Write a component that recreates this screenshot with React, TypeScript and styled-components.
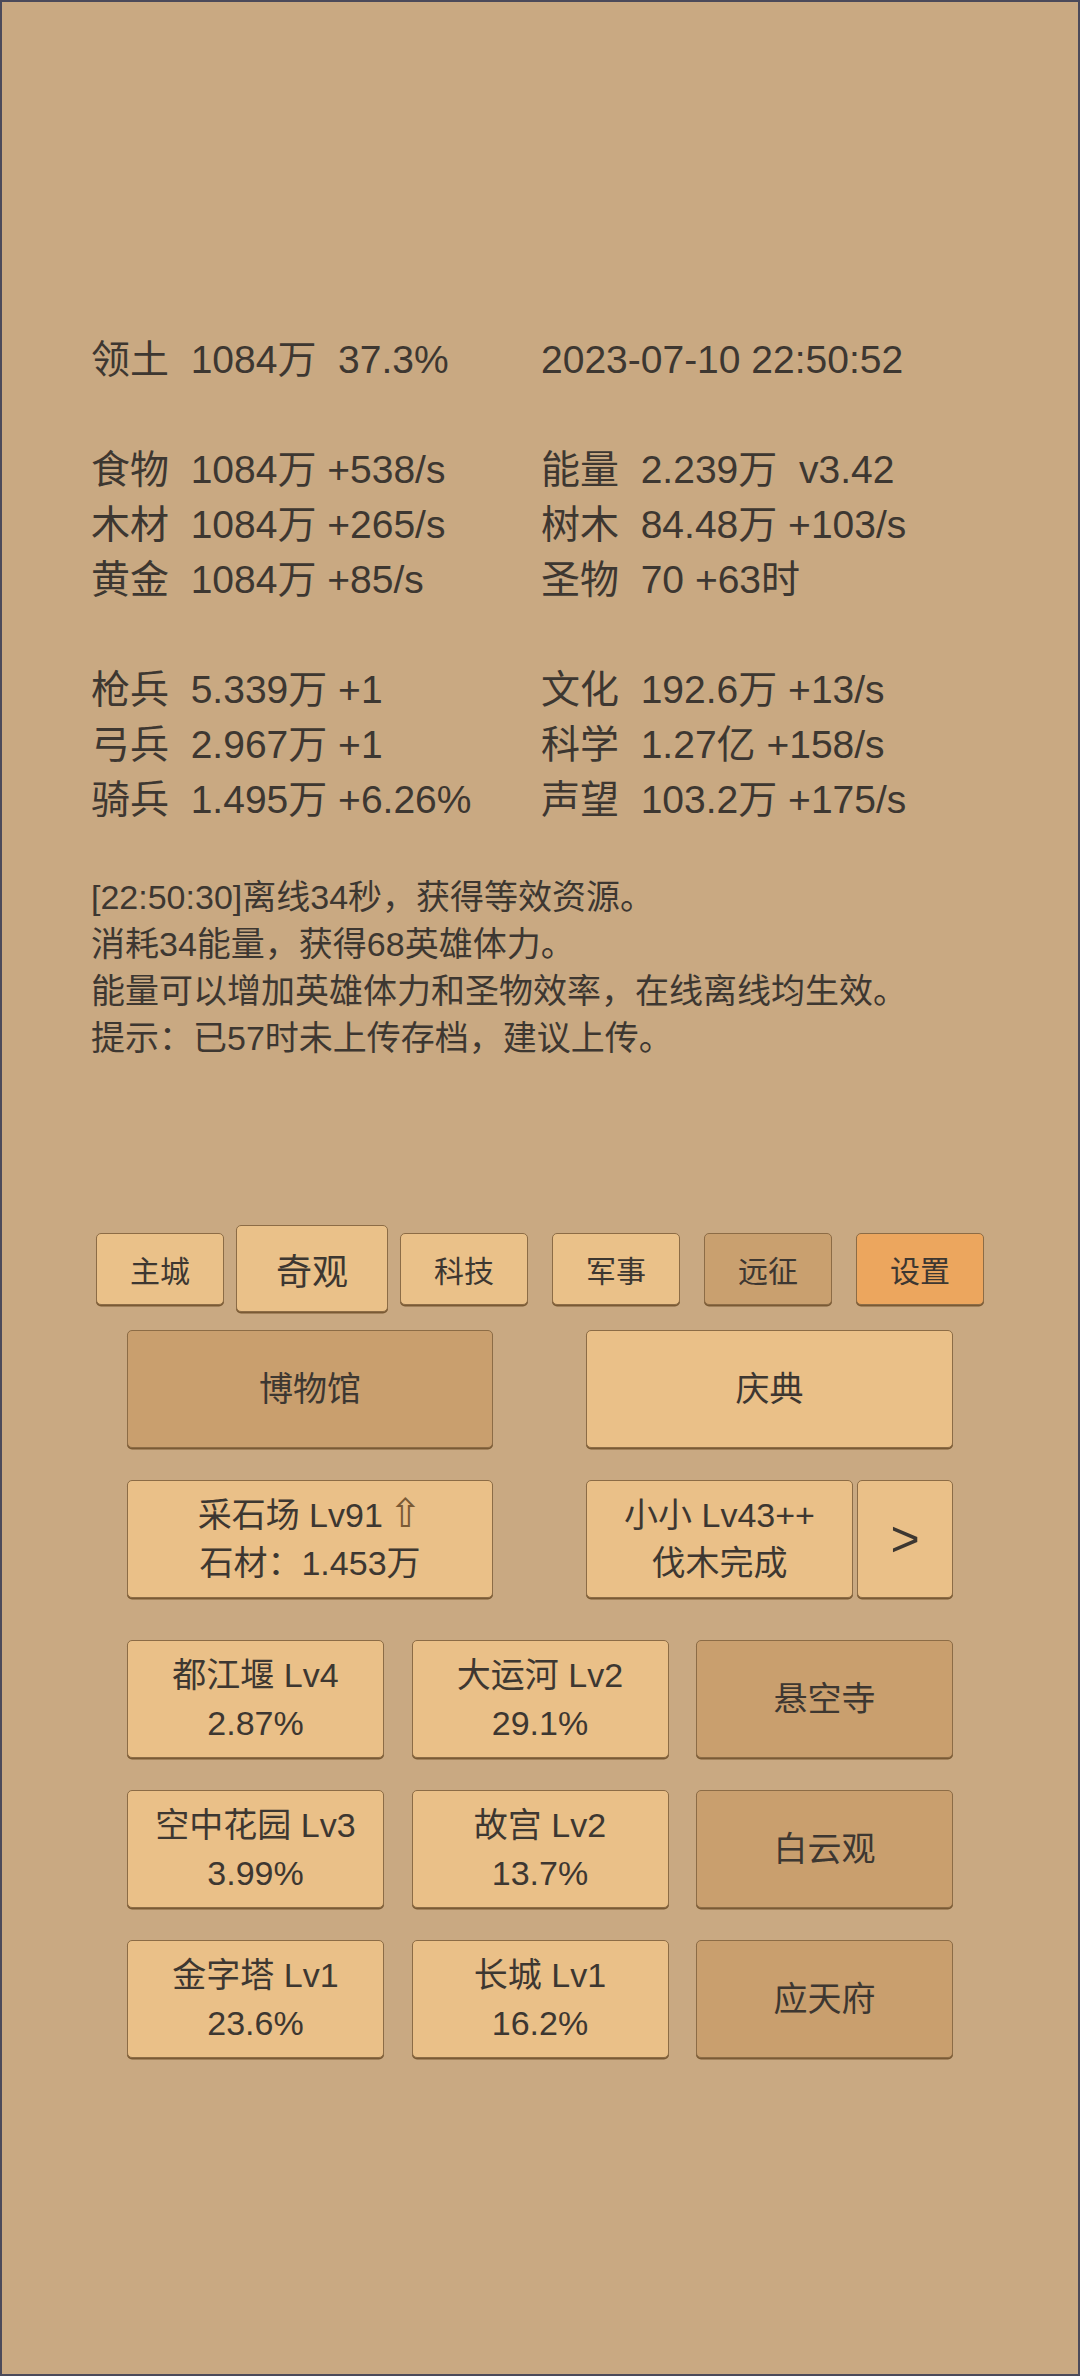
import styled, { createGlobalStyle } from "styled-components";

const GlobalStyle = createGlobalStyle`
    html, body {
        margin: 0;
        padding: 0;
        background: #c9a982;
    }
    * {
        box-sizing: border-box;
    }
`;

const Page = styled.div`
    width: 1080px;
    height: 2376px;
    border: 2px solid #4b4a5a;
    background: #c9a982;
    padding-top: 330px;
    font-family: "Liberation Sans", "Noto Sans CJK SC", sans-serif;
    color: #3d3731;
    overflow: hidden;
`;

const Stats = styled.div`
    padding-left: 89px;
    font-size: 39px;
    line-height: 55px;
`;

const StatRow = styled.div`
    display: grid;
    grid-template-columns: 450px 1fr;
    height: 55px;
    white-space: pre;
`;

const Log = styled.div`
    margin-top: 47px;
    padding-left: 89px;
    font-size: 34px;
    line-height: 47px;
`;

const Tabs = styled.div`
    margin-top: 163px;
    display: grid;
    grid-template-columns: repeat(6, 152px);
    justify-content: center;
    justify-items: center;
    align-items: center;
    height: 87px;
`;

const Tab = styled.div<{ $active?: boolean; $tone?: "light" | "dark" | "orange" }>`
    width: ${props => props.$active ? "152px" : "128px"};
    height: ${props => props.$active ? "87px" : "72px"};
    display: flex;
    align-items: center;
    justify-content: center;
    font-size: ${props => props.$active ? "36px" : "30px"};
    background: ${props =>
        props.$tone === "dark" ? "#c9a06f" : props.$tone === "orange" ? "#eca65e" : "#eac189"};
    border: 1px solid #8c6c46;
    border-radius: 5px;
    box-shadow: 0 1.5px 0 #7a5a34;
`;

const Pair = styled.div<{ $top: number }>`
    margin-top: ${props => props.$top}px;
    display: grid;
    grid-template-columns: 366px 367px;
    column-gap: 93px;
    justify-content: center;
    height: 118px;
`;

const Split = styled.div`
    display: grid;
    grid-template-columns: 267px 96px;
    column-gap: 4px;
`;

const Button = styled.div<{ $dark?: boolean; $big?: boolean }>`
    display: flex;
    flex-direction: column;
    align-items: center;
    justify-content: center;
    height: 118px;
    font-size: ${props => props.$big ? "50px" : "34px"};
    line-height: 48px;
    background: ${props => props.$dark ? "#c99f6e" : "#eac088"};
    border: 1px solid #8c6c46;
    border-radius: 5px;
    box-shadow: 0 1.5px 0 #7a5a34;
    white-space: pre;
`;

const Arrow = styled.span`
    font-family: "DejaVu Sans", sans-serif;
    color: #7a5a35;
    font-size: 40px;
    line-height: 40px;
    margin-left: 6px;
`;

const Wonders = styled.div`
    margin-top: 42px;
    display: grid;
    grid-template-columns: repeat(3, 257px);
    grid-auto-rows: 118px;
    column-gap: 27.5px;
    row-gap: 32px;
    justify-content: center;
`;

const stats: ([string, string] | null)[] = [
    ["领土  1084万  37.3%", "2023-07-10 22:50:52"],
    null,
    ["食物  1084万 +538/s", "能量  2.239万  v3.42"],
    ["木材  1084万 +265/s", "树木  84.48万 +103/s"],
    ["黄金  1084万 +85/s", "圣物  70 +63时"],
    null,
    ["枪兵  5.339万 +1", "文化  192.6万 +13/s"],
    ["弓兵  2.967万 +1", "科学  1.27亿 +158/s"],
    ["骑兵  1.495万 +6.26%", "声望  103.2万 +175/s"],
];

const logLines = [
    "[22:50:30]离线34秒，获得等效资源。",
    "消耗34能量，获得68英雄体力。",
    "能量可以增加英雄体力和圣物效率，在线离线均生效。",
    "提示：已57时未上传存档，建议上传。",
];

const tabs: { label: string; active?: boolean; tone?: "light" | "dark" | "orange" }[] = [
    { label: "主城" },
    { label: "奇观", active: true },
    { label: "科技" },
    { label: "军事" },
    { label: "远征", tone: "dark" },
    { label: "设置", tone: "orange" },
];

const wonders: { name: string; value?: string }[] = [
    { name: "都江堰 Lv4", value: "2.87%" },
    { name: "大运河 Lv2", value: "29.1%" },
    { name: "悬空寺" },
    { name: "空中花园 Lv3", value: "3.99%" },
    { name: "故宫 Lv2", value: "13.7%" },
    { name: "白云观" },
    { name: "金字塔 Lv1", value: "23.6%" },
    { name: "长城 Lv1", value: "16.2%" },
    { name: "应天府" },
];

export default function App() {
    return (
        <>
            <GlobalStyle />
            <Page>
                <Stats>
                    {stats.map((row, i) => (
                        <StatRow key={i}>
                            {row && <span>{row[0]}</span>}
                            {row && <span>{row[1]}</span>}
                        </StatRow>
                    ))}
                </Stats>
                <Log>
                    {logLines.map(line => <div key={line}>{line}</div>)}
                </Log>
                <Tabs>
                    {tabs.map(t => (
                        <Tab key={t.label} $active={t.active} $tone={t.tone}>{t.label}</Tab>
                    ))}
                </Tabs>
                <Pair $top={18}>
                    <Button $dark>博物馆</Button>
                    <Button>庆典</Button>
                </Pair>
                <Pair $top={32}>
                    <Button>
                        <div>采石场 Lv91<Arrow>⇧</Arrow></div>
                        <div>石材：1.453万</div>
                    </Button>
                    <Split>
                        <Button>
                            <div>小小 Lv43++</div>
                            <div>伐木完成</div>
                        </Button>
                        <Button $big>&gt;</Button>
                    </Split>
                </Pair>
                <Wonders>
                    {wonders.map(w => (
                        <Button key={w.name} $dark={!w.value}>
                            <div>{w.name}</div>
                            {w.value && <div>{w.value}</div>}
                        </Button>
                    ))}
                </Wonders>
            </Page>
        </>
    );
}
